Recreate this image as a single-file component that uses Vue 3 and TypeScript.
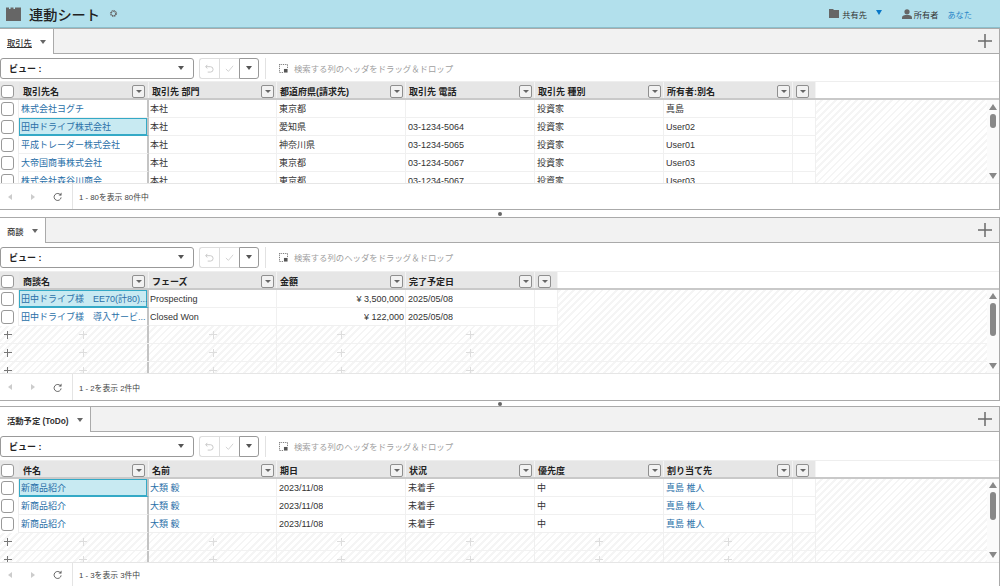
<template>
  <div class="page">
    <header class="top-bar">
      <svg class="sheet-icon" viewBox="0 0 15 14"><path d="M0 .5h3V2h1.5V.5h3V2H9V.5h6V14H0z" fill="#666" /></svg>
      <h1 class="title">連動シート</h1>
      <svg class="gear" viewBox="0 0 10 10">
        <circle cx="5" cy="5" r="2.6" fill="none" stroke="#666" stroke-width="1.6" stroke-dasharray="1.4 .6" />
        <circle cx="5" cy="5" r="3.5" fill="none" stroke="#666" stroke-width="1" stroke-dasharray="1.4 1.35" />
      </svg>
      <div class="top-right">
        <svg class="folder" viewBox="0 0 10 9"><path d="M0 0h4l1 1h5v8H0z" fill="#666" /></svg>
        <span class="shared">共有先</span>
        <span class="blue-caret"></span>
        <svg class="person" viewBox="0 0 10 10"><circle cx="5" cy="2.8" r="2.6" fill="#666" /><path d="M0 10V8.2C0 6.6 2.5 6 5 6s5 .6 5 2.2V10z" fill="#666" /></svg>
        <span class="owner">所有者</span>
        <span class="you">あなた</span>
      </div>
    </header>

    <template v-for="(panel, index) in panels" :key="panel.tab">
      <section class="panel" :class="panel.sizeClass">
        <div class="tab-strip">
          <div class="tab">
            <span class="tab-label" :class="{ 'is-active': panel.active }">{{ panel.tab }}</span>
            <span class="tab-caret"></span>
          </div>
          <div class="tab-rest">
            <svg class="add-tab" viewBox="0 0 14 14"><path d="M7 0v14M0 7h14" stroke="#6b6b6b" stroke-width="1.5" /></svg>
          </div>
        </div>

        <div class="toolbar">
          <div class="view-select">
            <span>ビュー :</span>
            <span class="small-caret"></span>
          </div>
          <div class="btn-group">
            <button class="tool-btn">
              <svg viewBox="0 0 10 10"><path d="M2.5 1 .8 3l1.7 2M1 3h5a2.8 2.8 0 0 1 0 6H3" fill="none" stroke="#c4c4c4" stroke-width="1" /></svg>
            </button>
            <button class="tool-btn">
              <svg viewBox="0 0 10 10"><path d="m1 5.5 2.8 2.7L9 2" fill="none" stroke="#cfcfcf" stroke-width="1" /></svg>
            </button>
            <button class="tool-btn tool-menu"><span class="small-caret"></span></button>
          </div>
          <div class="drop-zone">
            <svg class="drop-icon" viewBox="0 0 10 10">
              <path d="M.5.5h9v4M.5.5v9h4" fill="none" stroke="#555" stroke-dasharray="1 1" />
              <path d="M5.5 5.5h4v4h-4z" fill="#555" />
            </svg>
            <span>検索する列のヘッダをドラッグ＆ドロップ</span>
          </div>
        </div>

        <div class="grid">
          <div class="grid-head">
            <div class="check-cell"><span class="check head-check"></span></div>
            <div
              v-for="(col, c) in panel.columns"
              :key="col"
              class="head-cell"
              :class="{ 'first-col': c === 0 }"
            >
              <span class="head-label">{{ col }}</span>
              <span class="filter-btn"><i></i></span>
            </div>
            <div class="head-cell extra-col"><span class="filter-btn"><i></i></span></div>
          </div>

          <div class="grid-body">
            <div v-for="(row, r) in panel.rows" :key="r" class="row">
              <div class="check-cell body-check"><span class="check"></span></div>
              <div
                v-for="(cell, c) in row"
                :key="c"
                class="cell"
                :class="{
                  'first-col': c === 0,
                  link: panel.links.includes(c),
                  selected: r === panel.selected && c === 0,
                  right: panel.rightCols.includes(c)
                }"
              >
                <span class="cell-text">{{ cell }}</span>
              </div>
              <div class="cell extra-col"></div>
            </div>
            <div v-for="n in panel.blanks" :key="'blank' + n" class="row blank-row">
              <div class="check-cell blank-check"><span class="plus plus-dark"></span></div>
              <div
                v-for="(col, c) in panel.columns"
                :key="col"
                class="cell blank-cell"
                :class="{ 'first-col': c === 0 }"
              ><span class="plus"></span></div>
              <div class="cell blank-cell extra-col"></div>
            </div>

            <div class="scrollbar">
              <span class="arrow-up"></span>
              <span class="thumb" :class="panel.thumbClass"></span>
              <span class="arrow-down"></span>
            </div>
          </div>
        </div>

        <footer class="pager">
          <span class="pager-left"></span>
          <span class="pager-right"></span>
          <svg class="reload" viewBox="0 0 10 10"><path d="M8.4 3.4A3.9 3.9 0 1 0 9 6" fill="none" stroke="#666" stroke-width="1.1" /><path d="M6.2 3.8h3.3V.6z" fill="#666" /></svg>
          <span class="pager-text">{{ panel.footer }}</span>
        </footer>
      </section>
      <div v-if="index < panels.length - 1" class="splitter" :class="{ narrow: index === 1 }"><span></span></div>
    </template>
  </div>
</template>

<script setup lang="ts">
interface Panel {
  tab: string
  sizeClass: string
  thumbClass: string
  active: boolean
  columns: string[]
  rows: string[][]
  links: number[]
  rightCols: number[]
  selected: number
  blanks: number
  footer: string
}

const todo = ['新商品紹介', '大類 毅', '2023/11/08', '未着手', '中', '真島 椎人']

const panels: Panel[] = [
  {
    tab: '取引先',
    sizeClass: 'panel-accounts',
    thumbClass: 'thumb-short',
    active: true,
    columns: ['取引先名', '取引先 部門', '都道府県(請求先)', '取引先 電話', '取引先 種別', '所有者:別名'],
    rows: [
      ['株式会社ヨグチ', '本社', '東京都', '', '投資家', '真島'],
      ['田中ドライブ株式会社', '本社', '愛知県', '03-1234-5064', '投資家', 'User02'],
      ['平成トレーダー株式会社', '本社', '神奈川県', '03-1234-5065', '投資家', 'User01'],
      ['大帝国商事株式会社', '本社', '東京都', '03-1234-5067', '投資家', 'User03'],
      ['株式会社森谷川商会', '本社', '東京都', '03-1234-5067', '投資家', 'User03']
    ],
    links: [0],
    rightCols: [],
    selected: 1,
    blanks: 0,
    footer: '1 - 80を表示 80件中'
  },
  {
    tab: '商談',
    sizeClass: 'panel-deals',
    thumbClass: 'thumb-long',
    active: false,
    columns: ['商談名', 'フェーズ', '金額', '完了予定日'],
    rows: [
      ['田中ドライブ様　EE70(計80)...', 'Prospecting', '¥ 3,500,000', '2025/05/08'],
      ['田中ドライブ様　導入サービ...', 'Closed Won', '¥ 122,000', '2025/05/08']
    ],
    links: [0],
    rightCols: [2],
    selected: 0,
    blanks: 3,
    footer: '1 - 2を表示 2件中'
  },
  {
    tab: '活動予定 (ToDo)',
    sizeClass: 'panel-todo',
    thumbClass: 'thumb-mid',
    active: false,
    columns: ['件名', '名前', '期日', '状況', '優先度', '割り当て先'],
    rows: [todo, todo, todo],
    links: [0, 1, 5],
    rightCols: [],
    selected: 0,
    blanks: 2,
    footer: '1 - 3を表示 3件中'
  }
]
</script>

<style>
body {
  margin: 0;
  background: #fff;
}
</style>

<style scoped>
.page {
  width: 1000px;
  height: 586px;
  overflow: hidden;
  display: flex;
  flex-direction: column;
  font-family: "Liberation Sans", "Noto Sans CJK JP", sans-serif;
  font-size: 9px;
  color: #333;
  background: #fff;
}

.top-bar {
  height: 27px;
  flex: none;
  display: flex;
  align-items: center;
  padding-left: 6px;
  background: #b2e0ec;
  border-bottom: 1px solid #8bbfcc;
}

.sheet-icon {
  width: 15px;
  height: 14px;
}

.title {
  margin: 0 0 0 8px;
  font-size: 14.2px;
  font-weight: 500;
  color: #222;
}

.gear {
  width: 9px;
  height: 9px;
  margin-left: 9px;
}

.top-right {
  margin-left: auto;
  display: flex;
  align-items: center;
  padding-right: 28px;
  font-size: 8.2px;
}

.folder {
  width: 10px;
  height: 9px;
  margin-right: 3px;
}

.shared {
  color: #333;
}

.blue-caret {
  width: 0;
  height: 0;
  margin: -3px 20px 0 9px;
  border-left: 3.5px solid transparent;
  border-right: 3.5px solid transparent;
  border-top: 5px solid #0a78c8;
}

.person {
  width: 10px;
  height: 10px;
  margin-right: 2px;
}

.you {
  margin-left: 9px;
  color: #2a86c8;
}

.panel {
  flex: none;
  display: flex;
  flex-direction: column;
  box-sizing: border-box;
  border-top: 1px solid #aaa;
  border-right: 1px solid #aaa;
  border-bottom: 1px solid #aaa;
}

.panel-accounts {
  height: 182px;
}

.panel-deals {
  height: 184px;
}

.panel-todo {
  flex: 1;
  border-bottom: none;
}

.splitter {
  height: 7px;
  flex: none;
  display: flex;
  align-items: center;
  justify-content: center;
  background: #fff;
}

.splitter.narrow {
  height: 5px;
}

.splitter span {
  width: 4px;
  height: 4px;
  border-radius: 50%;
  background: #666;
}

.tab-strip {
  height: 25px;
  flex: none;
  display: flex;
}

.tab {
  display: flex;
  align-items: center;
  gap: 8px;
  padding: 0 7px;
  background: #fff;
  border-right: 1px solid #aaa;
  font-weight: 500;
  font-size: 8.3px;
  color: #333;
}

.panel-todo .tab {
  font-weight: 700;
}

.tab-label.is-active {
  text-decoration: underline;
}

.tab-caret {
  width: 0;
  height: 0;
  border-left: 3px solid transparent;
  border-right: 3px solid transparent;
  border-top: 4px solid #666;
}

.tab-rest {
  flex: 1;
  display: flex;
  align-items: center;
  justify-content: flex-end;
  padding-right: 7px;
  background: #f2f2f2;
  border-bottom: 1px solid #aaa;
}

.add-tab {
  width: 14px;
  height: 14px;
}

.toolbar {
  height: 28px;
  flex: none;
  display: flex;
  align-items: center;
}

.panel-accounts .toolbar {
  height: 27px;
  box-sizing: border-box;
  padding-top: 1px;
}

.view-select {
  box-sizing: border-box;
  width: 194px;
  height: 21px;
  display: flex;
  align-items: center;
  justify-content: space-between;
  padding: 0 9px 0 8px;
  border: 1px solid #999;
  border-radius: 3px;
  font-weight: 700;
  color: #222;
}

.small-caret {
  display: inline-block;
  width: 0;
  height: 0;
  border-left: 3px solid transparent;
  border-right: 3px solid transparent;
  border-top: 4px solid #555;
}

.btn-group {
  display: flex;
  height: 21px;
  margin-left: 5px;
  padding-right: 6px;
  border-right: 1px solid #e2e2e2;
}

.tool-btn {
  box-sizing: border-box;
  width: 20px;
  height: 21px;
  padding: 0;
  display: flex;
  align-items: center;
  justify-content: center;
  background: #fff;
  border: 1px solid #ddd;
  border-right: none;
}

.tool-btn:first-child {
  border-radius: 3px 0 0 3px;
}

.tool-btn svg {
  width: 9px;
  height: 9px;
}

.tool-menu {
  border: 1px solid #999;
  border-radius: 0 3px 3px 0;
}

.drop-zone {
  display: flex;
  align-items: center;
  gap: 6px;
  margin-left: 13px;
  color: #a0a0a0;
  font-size: 8.4px;
}

.drop-icon {
  width: 9px;
  height: 9px;
}

.grid {
  position: relative;
  height: 102px;
  flex: none;
  display: flex;
  flex-direction: column;
  border-bottom: 1px solid #e6e6e6;
}

.grid-head {
  height: 19px;
  flex: none;
  display: flex;
  box-sizing: border-box;
  border-top: 1px solid #eee;
  border-bottom: 2px solid #c9c9c9;
}

.check-cell {
  box-sizing: border-box;
  width: 19px;
  flex: none;
  display: flex;
  align-items: center;
  padding-left: 1px;
  background: #f0f0f0;
}

.grid-head .check-cell {
  padding-top: 2px;
  background: #e8e8e8;
}

.body-check {
  background: #fff;
  border-right: 1px solid #eee;
}

.check {
  box-sizing: border-box;
  width: 13px;
  height: 14px;
  background: #fff;
  border: 1px solid #999;
  border-radius: 3px;
}

.head-check {
  height: 13px;
}

.head-cell {
  box-sizing: border-box;
  width: 129px;
  flex: none;
  display: flex;
  align-items: center;
  justify-content: space-between;
  padding: 2px 2px 0 3px;
  background: #e6e6e6;
  border-right: 1px solid #f4f4f4;
  font-weight: 700;
  color: #222;
}

.head-cell.first-col {
  width: 130px;
  padding-left: 4px;
  padding-right: 3px;
}

.first-col + .head-cell,
.first-col + .cell {
  width: 128px;
  padding-left: 1px;
}

.first-col + .head-cell {
  padding-left: 3px;
}

.head-cell.extra-col {
  width: 23px;
  justify-content: flex-start;
  padding-left: 3px;
}

.filter-btn {
  box-sizing: border-box;
  width: 13px;
  height: 13px;
  display: flex;
  align-items: center;
  justify-content: center;
  background: #f2f2f2;
  border: 1px solid #8f8f8f;
  border-radius: 2px;
}

.filter-btn i {
  width: 0;
  height: 0;
  border-left: 3px solid transparent;
  border-right: 3px solid transparent;
  border-top: 3px solid #666;
}

.grid-body {
  position: relative;
  flex: 1;
  overflow: hidden;
  background: repeating-linear-gradient(135deg, #f5f5f5 0 2px, #fff 2px 5px);
}

.row {
  height: 18px;
  display: flex;
}

.cell {
  box-sizing: border-box;
  width: 129px;
  flex: none;
  display: flex;
  align-items: center;
  padding: 0 2px;
  background: #fff;
  border-right: 1px solid #f0f0f0;
  border-bottom: 1px solid #f0f0f0;
  color: #333;
}

.cell-text {
  overflow: hidden;
  white-space: nowrap;
}

.cell.first-col {
  width: 130px;
  padding-right: 0;
  border-right: 2px solid #c4c4c4;
}

.cell.extra-col {
  width: 23px;
}

.cell.link {
  color: #2a6fa8;
}

.cell.right {
  justify-content: flex-end;
  padding-right: 1px;
}

.cell.selected {
  background: #c8eaf2;
  box-shadow: inset 0 0 0 1px #34a9c6;
  border-bottom-color: #34a9c6;
}

.blank-row {
  box-sizing: border-box;
  border-bottom: 1px solid #f2f2f2;
}

.blank-check {
  justify-content: center;
  padding: 0 4px 0 0;
  background: none;
}

.blank-cell {
  justify-content: center;
  padding: 0;
  background: none;
  border-bottom: none;
}

.plus {
  width: 8px;
  height: 8px;
  background:
    linear-gradient(#ddd, #ddd) center / 100% 1px no-repeat,
    linear-gradient(#ddd, #ddd) center / 1px 100% no-repeat;
}

.plus-dark {
  background:
    linear-gradient(#777, #777) center / 100% 1px no-repeat,
    linear-gradient(#777, #777) center / 1px 100% no-repeat;
}

.scrollbar {
  position: absolute;
  top: 0;
  right: 0;
  bottom: 0;
  width: 12px;
  display: flex;
  flex-direction: column;
  align-items: center;
  padding: 3px 0 4px;
  box-sizing: border-box;
  background: #fbfbfb;
}

.panel-accounts .scrollbar {
  padding-top: 4px;
}

.arrow-up {
  width: 0;
  height: 0;
  border-left: 4px solid transparent;
  border-right: 4px solid transparent;
  border-bottom: 6px solid #888;
}

.arrow-down {
  width: 0;
  height: 0;
  margin-top: auto;
  border-left: 4px solid transparent;
  border-right: 4px solid transparent;
  border-top: 6px solid #888;
}

.thumb {
  width: 6px;
  margin-top: 4px;
  border-radius: 3px;
  background: #888;
}

.thumb-short {
  height: 14px;
}

.thumb-long {
  height: 33px;
}

.thumb-mid {
  height: 28px;
}

.pager {
  flex: 1;
  display: flex;
  align-items: center;
  padding-left: 8px;
  font-size: 7.8px;
  color: #444;
}

.pager-left,
.pager-right {
  width: 0;
  height: 0;
  border-top: 3.5px solid transparent;
  border-bottom: 3.5px solid transparent;
}

.pager-left {
  border-right: 4px solid #ccc;
}

.pager-right {
  margin-left: 19px;
  border-left: 4px solid #ccc;
}

.reload {
  width: 9px;
  height: 9px;
  margin-left: 18px;
}

.pager-text {
  height: 100%;
  display: flex;
  align-items: center;
  margin-left: 10px;
  padding-left: 6px;
  border-left: 1px solid #e4e4e4;
}
</style>
